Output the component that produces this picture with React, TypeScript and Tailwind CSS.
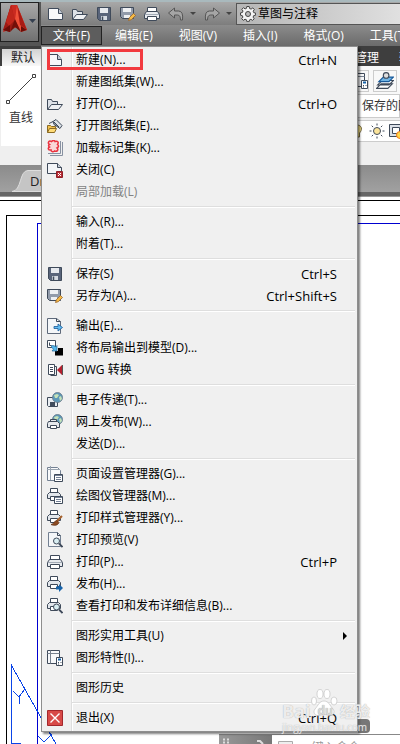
import type { ReactNode } from 'react';

const INK = '#3f4a5a';

function Icon({ children, className = 'w-4 h-4' }: { children: ReactNode; className?: string }) {
  return (
    <svg viewBox="0 0 16 16" className={className} fill="none" stroke={INK} aria-hidden="true">
      {children}
    </svg>
  );
}

/* Shared icon parts */

const Sheet = () => (
  <>
    <path d="M.5 2.500h10l4 5v6H.5z" fill="#f7f8fa" />
    <path d="M10.500 2.500v5h4" fill="#c3cad4" />
  </>
);

const Folder = () => (
  <>
    <path d="M.5 13.500v-10h4l1 2h5v3" fill="#dde1e7" />
    <path d="M.5 13.500l4-5h11l-4 5z" fill="#eef0f3" />
  </>
);

const Disk = () => (
  <>
    <path d="M1.500 1.500h13v13h-11l-2-2z" fill="#59647a" />
    <path d="M4 2h8v5H4z" fill="#e6e9ee" stroke="none" />
    <path d="M5 10h6v4H5z" fill="#d5dae2" stroke="none" />
    <path d="M6.500 10.500v3.500" strokeWidth="1.500" />
  </>
);

const Printer = () => (
  <>
    <path d="M3.500 5.500v-4h9v4" fill="#fff" />
    <path d="M2.500 5.500h11l2 3v4h-15v-4z" fill="#e8ebef" />
    <path d="M3.500 10.500h9v4h-9z" fill="#fff" />
    <path d="M1 8.500h14" stroke="#a3abb6" />
  </>
);

const SmallPrinter = () => (
  <>
    <path d="M3.500 4.500v-4h7v4" fill="#fff" />
    <path d="M2.500 4.500h9l2 2v4H.5v-4z" fill="#e3e7ec" />
    <path d="M3.500 8.500h7v4h-7z" fill="#fff" />
  </>
);

const Pencil = () => (
  <path d="M8.500 14.500l.8-2.800 4.200-4.200 2 2-4.200 4.200z" fill="#f5bb48" stroke="#9a642a" strokeWidth=".8" />
);

const Loupe = () => (
  <>
    <circle cx="9.500" cy="9" r="3" fill="#d9eef2" />
    <path d="M12 11.500l3.500 3.500" strokeWidth="1.800" />
  </>
);

const Globe = () => (
  <>
    <circle cx="10.500" cy="5.500" r="5" fill="#5d98b8" stroke="#657686" strokeWidth=".8" />
    <path d="M7 3l3-1 2 1-2 3-2 0zM12 5l2-1 1 3-2 2z" fill="#c5e2b8" stroke="none" />
  </>
);

const Palette = () => (
  <>
    <path d="M7.500 8.500h8v7h-8z" fill="#fff" />
    <path d="M8 9.500h7" stroke="#738095" />
    <path d="M9 11.500h5M9 13.500h5" stroke="#738095" />
  </>
);

const BlueArrow = () => (
  <path d="M9 10.500h3v-2.500l4 4-4 4v-2.500H9z" fill="#1763a9" stroke="none" />
);

const icons: Record<string, ReactNode> = {
  new: <Sheet />,
  open: <Folder />,
  save: <Disk />,
  print: <Printer />,
  saveAs: (
    <>
      <path d="M.5 1.500h13v11h-11l-2-2z" fill="#929baa" />
      <path d="M3 2h8v4H3zM4 9h6v3H4z" fill="#eef0f3" stroke="none" />
      <Pencil />
    </>
  ),
  openSet: (
    <>
      <path d="M6 3.500l3-2 6 6-2 3-6-4z" fill="#dde3e8" />
      <path d="M2 5.500l4-2 5 5M7 4l5 5" />
      <path d="M.5 14.500v-7h3l1 1h4v2" fill="#f2c14d" stroke="#8b6a24" />
      <path d="M.5 14.500l2-4h7l-2 4z" fill="#ffdc77" stroke="#8b6a24" />
    </>
  ),
  markup: (
    <>
      <path d="M15.500 2v13.500H3M13.500 1v12.500H1" stroke="#8791a1" />
      <path
        d="M2.500 4.500C0 3 2 0 4.500 1.500 6 0 7.500 0 8 1.500c3-1 4 1 2.500 3C12.500 6 11 7.500 10 8c2 2 0 4-2.500 3C6 12.500 4 11.500 4 10 1 10.500.5 8 2.500 7 1 6 1.500 5 2.500 4.500z"
        fill="#f9d7d8"
        stroke="#ea3340"
        strokeWidth="1.500"
      />
    </>
  ),
  close: (
    <>
      <path d="M.5 1.500h10l4 4v6H.5z" fill="#f3f5f8" />
      <path d="M10.500 1.500v4h4" fill="#c9d0d9" />
      <path d="M9.500 9.500h6v6h-6z" fill="#b92d35" stroke="#8f2028" />
      <path d="M11 11l3 3M14 11l-3 3" stroke="#fff" />
    </>
  ),
  exportFile: (
    <>
      <path d="M.5.5h9l4 3v12H.5z" fill="#f4f6f8" stroke="#5e697a" />
      <path d="M9.500.5v3h4" />
      <path d="M7 8.500h4V6l4.500 3.500L11 13v-2.500H7z" fill="#65bdf0" stroke="#17599a" strokeWidth=".8" />
    </>
  ),
  layout: (
    <>
      <path d="M.5.5h8v7h-8z" fill="#fff" />
      <path d="M2.500 2.500v3h2" />
      <path d="M8 11h3V8h5v7.500H8z" fill="#000" stroke="none" />
      <path d="M4.500 5.500l3 .3 1 1.200 1.500-1.500V11H5l1.500-1.800-2-2z" fill="#56b8ec" stroke="#27699a" strokeWidth=".7" />
    </>
  ),
  dwg: (
    <>
      <path d="M1.500 2.500h6v10h-6z" fill="#fff" />
      <path d="M7.500 4.500h2v9h-6" />
      <path d="M3 5.500h3M3 7.500h3M3 9.500h3" />
      <path d="M15 3v10l-5-5z" fill="#b51f2e" stroke="none" />
      <path d="M15.500 3v10" stroke="#555" />
    </>
  ),
  transmit: (
    <>
      <path d="M.5 5.500h10v9h-9l-1-1z" fill="#e9edf1" />
      <path d="M3 10h5v4H3z" fill="#414c5c" stroke="none" />
      <Globe />
    </>
  ),
  web: (
    <>
      <Globe />
      <path d="M3.500 7.500v-2h6v2M1.500 7.500h9l2 2v4H.5v-4z" fill="#e6e9ed" />
      <path d="M3.500 11.500h6v3h-6z" fill="#fff" />
    </>
  ),
  pageSetup: (
    <>
      <path d="M.5 1.500h10l3 3v10H.5z" fill="#f9fafb" stroke="#738092" />
      <path d="M3.500 0v14M0 3.500h13" stroke="#9aa4b0" />
      <Palette />
    </>
  ),
  plotter: (
    <>
      <SmallPrinter />
      <Palette />
    </>
  ),
  style: (
    <>
      <SmallPrinter />
      <path d="M15 6l-5 5" stroke="#a8622d" strokeWidth="2" />
      <path d="M4 14.500c3 0 3-4 6-4l2 2c-1 3-5 3.500-8 2z" fill="#8d4b22" stroke="#623318" strokeWidth=".8" />
    </>
  ),
  preview: (
    <>
      <path d="M1.500.5h9l3 3v11h-12z" fill="#f4f6f8" stroke="#738092" />
      <path d="M10.500.5v3h3" />
      <Loupe />
    </>
  ),
  publish: (
    <>
      <SmallPrinter />
      <BlueArrow />
    </>
  ),
  details: (
    <>
      <SmallPrinter />
      <Loupe />
    </>
  ),
  props: (
    <>
      <path d="M.5 .5h12v13H.5z" fill="#f7f8fa" />
      <path d="M3.500 .5v13M.5 3.500h12" stroke="#77818f" />
      <path d="M9.500 7.500h6v8h-6z" fill="#fff" />
      <path d="M11 9.500h3" stroke="#1763a9" strokeWidth="2" />
      <path d="M11 12.500h1M13.500 12.500h1M11 14h1" />
    </>
  ),
  exit: (
    <>
      <path d="M.5 .5h15v15H.5z" fill="#d84a48" stroke="#a3272c" />
      <path d="M3.500 3.500l9 9M12.500 3.500l-9 9" stroke="#fff" strokeWidth="1.400" />
    </>
  ),
  undo: <path d="M.5 7l6-5v3h4q5 0 4 9h-2q0-5-3-5h-3v3z" fill="#a5a5a5" stroke="#555" />,
  redo: <path d="M15.500 7l-6-5v3h-4q-5 0-4 9h2q0-5 3-5h3v3z" fill="#a5a5a5" stroke="#555" />,
};

type Item = { label: string; icon?: string; keys?: string; disabled?: boolean; sub?: boolean };

const groups: Item[][] = [
  [
    { label: '新建(N)...', icon: 'new', keys: 'Ctrl+N' },
    { label: '新建图纸集(W)...' },
    { label: '打开(O)...', icon: 'open', keys: 'Ctrl+O' },
    { label: '打开图纸集(E)...', icon: 'openSet' },
    { label: '加载标记集(K)...', icon: 'markup' },
    { label: '关闭(C)', icon: 'close' },
    { label: '局部加载(L)', disabled: true },
  ],
  [{ label: '输入(R)...' }, { label: '附着(T)...' }],
  [
    { label: '保存(S)', icon: 'save', keys: 'Ctrl+S' },
    { label: '另存为(A)...', icon: 'saveAs', keys: 'Ctrl+Shift+S' },
  ],
  [
    { label: '输出(E)...', icon: 'exportFile' },
    { label: '将布局输出到模型(D)...', icon: 'layout' },
    { label: 'DWG 转换', icon: 'dwg' },
  ],
  [
    { label: '电子传递(T)...', icon: 'transmit' },
    { label: '网上发布(W)...', icon: 'web' },
    { label: '发送(D)...' },
  ],
  [
    { label: '页面设置管理器(G)...', icon: 'pageSetup' },
    { label: '绘图仪管理器(M)...', icon: 'plotter' },
    { label: '打印样式管理器(Y)...', icon: 'style' },
    { label: '打印预览(V)', icon: 'preview' },
    { label: '打印(P)...', icon: 'print', keys: 'Ctrl+P' },
    { label: '发布(H)...', icon: 'publish' },
    { label: '查看打印和发布详细信息(B)...', icon: 'details' },
  ],
  [
    { label: '图形实用工具(U)', sub: true },
    { label: '图形特性(I)...', icon: 'props' },
  ],
  [{ label: '图形历史' }],
  [{ label: '退出(X)', icon: 'exit', keys: 'Ctrl+Q' }],
];

function FileMenu() {
  return (
    <div
      role="menu"
      className="absolute left-[41px] top-[46px] w-[317px] py-[2px] border border-[#8e8e8e] bg-[#f0f0f0] text-black shadow-[2px_2px_2px_#00000080] bg-[linear-gradient(to_right,#f0f0f0_29px,#dedede_29px,#dedede_30px,#fff_30px,#fff_31px,#f0f0f0_31px)]"
    >
      {groups.map((group, g) => (
        <div key={g}>
          {g > 0 && (
            <div role="separator" className="h-2 pt-[3px] pl-[30px] pr-[2px]">
              <div className="h-[2px] border-t border-[#dedede] bg-white" />
            </div>
          )}
          {group.map((item) => (
            <button
              key={item.label}
              role="menuitem"
              disabled={item.disabled}
              className="relative flex items-center w-full h-[22px] pl-[5px] pr-5 text-left whitespace-nowrap disabled:text-[#838383]"
            >
              <span className="w-[29px] shrink-0">{item.icon && <Icon>{icons[item.icon]}</Icon>}</span>
              <span className="flex-1">{item.label}</span>
              {item.keys && <span className="text-[13px]">{item.keys}</span>}
              {item.sub && (
                <span className="absolute right-[10px] border-y-4 border-y-transparent border-l-4 border-l-black" />
              )}
            </button>
          ))}
        </div>
      ))}
      <div className="absolute left-[5px] top-[2px] w-[96px] h-[21px] border-[3px] border-[#f23a3f]" />
    </div>
  );
}

function AppLogo() {
  return (
    <button
      aria-label="应用程序菜单"
      className="flex items-center w-[39px] h-[40px] border border-[#222] bg-linear-to-b from-[#a9a9a9] to-[#717171]"
    >
      <svg viewBox="0 0 37 38" className="w-[37px] h-[38px]" aria-hidden="true">
        <path d="M10 2h6l10 25-9-3-15 5z" fill="#c92a20" />
        <path d="M10 2L2 27l7 2 5-10z" fill="#9c1a13" />
        <path d="M10 2l4 15-6 6-3-4z" fill="#bf261b" />
        <path d="M16 2l10 25-6 2-6-12z" fill="#ef5038" />
        <path d="M16 2l10 25-7-5z" fill="#a81b14" />
        <path d="M14 16l6 13-6-5-5 5z" fill="#721009" />
        <path d="M2 27l7-5v7zM26 27l-6-4v6z" fill="#6b0d08" />
        <path d="M28 16h7l-3.500 4z" fill="#354050" />
      </svg>
    </button>
  );
}

function Toolbar() {
  return (
    <div className="flex items-center h-[23px] bg-linear-to-b from-[#a8a8a8] to-[#7d7d7d] overflow-hidden">
      <div className="flex items-center gap-2 pl-[7px] shrink-0">
        {['new', 'open', 'save', 'saveAs', 'print', 'undo'].map((name) => (
          <button key={name} aria-label={name}>
            <Icon>{icons[name]}</Icon>
          </button>
        ))}
      </div>
      <span className="ml-[6px] shrink-0 border-x-[3px] border-x-transparent border-t-[3px] border-t-[#444]" />
      <button aria-label="redo" className="ml-2 shrink-0">
        <Icon>{icons.redo}</Icon>
      </button>
      <span className="ml-[6px] shrink-0 border-x-[3px] border-x-transparent border-t-[3px] border-t-[#444]" />
      <button className="flex items-center gap-[2px] flex-1 h-[22px] ml-1 pl-[3px] border border-r-0 border-[#555] bg-linear-to-r from-[#b5b5b5] to-[#e0e0e0] text-black whitespace-nowrap">
        <svg viewBox="0 0 16 16" className="w-4 h-4 shrink-0" fill="none" stroke="#444" aria-hidden="true">
          <path
            d="M6.800.5h2.400l.4 2 1.500.6 1.700-1.200 1.500 1.600-1.100 1.700.6 1.500 1.800.3v2.200l-1.900.4-.6 1.500 1.100 1.700-1.600 1.600-1.700-1.100-1.400.6-.4 1.800H6.900l-.4-1.900-1.500-.6-1.700 1.200-1.600-1.700 1.200-1.600-.6-1.500L.5 9.200V6.900l1.900-.4.6-1.500-1.200-1.700 1.600-1.600 1.700 1.200 1.400-.6z"
            fill="#f4f4f4"
          />
          <circle cx="8" cy="8" r="2.500" fill="#bbb" />
        </svg>
        草图与注释
      </button>
    </div>
  );
}

function MenuBar() {
  return (
    <nav className="flex h-[21px] pt-px bg-linear-to-b from-[#8c8c8c] to-[#6b6b6b] text-white overflow-hidden">
      <button className="w-[61px] shrink-0 h-[19px] border border-[#222] bg-[#5d5d5d] leading-4">文件(F)</button>
      {['编辑(E)', '视图(V)', '插入(I)', '格式(O)', '工具(T)'].map((label) => (
        <button key={label} className="shrink-0 h-[19px] px-[13px] leading-4 whitespace-nowrap">
          {label}
        </button>
      ))}
    </nav>
  );
}

function Ribbon() {
  return (
    <section>
      <div className="flex justify-between h-5 bg-[#3e3e3e] overflow-hidden">
        <button className="w-[50px] ml-[2px] mt-[3px] pl-[9px] text-left bg-linear-to-b from-[#d2d2d2] to-[#f8f8f8] text-[#222] leading-4">
          默认
        </button>
        <div className="flex gap-5 w-[45px] text-white whitespace-nowrap leading-6">
          <button className="shrink-0">管理</button>
          <button className="shrink-0">输出</button>
        </div>
      </div>
      <div className="flex justify-between h-[99px] bg-[#efefef] overflow-hidden text-[#333]">
        <div className="ml-px w-[60px] h-20 bg-white">
          <button className="flex flex-col items-start pl-[5px] pt-2">
            <svg viewBox="0 0 32 32" className="w-8 h-8" fill="#fff" stroke="#444" aria-hidden="true">
              <path d="M3 27L27 3" />
              <path d="M.5 26.500h3v3h-3zM26.500.5h3v3h-3z" />
            </svg>
            <span className="pl-[3px] leading-6">直线</span>
          </button>
        </div>
        <div className="w-[50px]">
          <div className="flex gap-1 h-[28px] pt-1 bg-[#f8f8f8]">
            <button aria-label="图层特性" className="flex items-center justify-center w-[19px] h-[22px] border border-[#ccc]">
              <Icon>{icons.props}</Icon>
            </button>
            <button aria-label="图层" className="flex items-center justify-center w-[24px] h-[22px] border border-[#ccc]">
              <Icon className="w-[18px] h-[18px]">
                <path d="M.5 14.500l4-4h10l-4 4zM1.500 11.500l4-4h10l-4 4z" fill="#fff" />
                <path d="M2.500 8.500l4-4h9l-4 4z" fill="#70b4e4" stroke="#17599a" />
                <circle cx="9" cy="3" r="2.500" fill="#ddd" />
              </Icon>
            </button>
          </div>
          <div className="h-6 pl-[11px] border border-[#ccc] bg-white leading-[22px] whitespace-nowrap">保存的图层</div>
          <div className="flex items-center h-[22px] mt-[2px] gap-[3px] border-y border-[#ccc] bg-white">
            <Icon className="w-4 h-4 shrink-0">
              <path d="M6.500 2c6 0 6 5 3 8v4h-5v-4c-3-3-3-8 2-8z" fill="#f4df84" stroke="#766b45" />
            </Icon>
            <Icon className="w-4 h-4 shrink-0">
              <circle cx="8" cy="8" r="3.500" fill="#fbe49a" />
              <path d="M8 .5v2M8 13.500v2M.5 8h2M13.500 8h2M2.700 2.700l1.400 1.400M11.900 11.900l1.400 1.400M2.700 13.300l1.400-1.400M11.900 4.100l1.400-1.400" />
            </Icon>
            <Icon className="w-4 h-4 shrink-0">
              <path d="M1.500 1.500h13v12h-13z" fill="#dce1e8" />
              <path d="M4.500 4.500h7v6h-7z" fill="#fff" />
              <circle cx="12" cy="12" r="3.500" fill="#ffd64a" stroke="#f47a19" />
            </Icon>
          </div>
        </div>
      </div>
      <div className="h-[27px] pt-[5px] bg-linear-to-b from-[#8b8b8b] to-[#a1a1a1]">
        <button className="relative block w-20 h-[22px] ml-3 text-left text-[#222]">
          <svg viewBox="0 0 80 22" className="absolute inset-0 w-20 h-[22px]" aria-hidden="true">
            <path d="M0 21.500C10 21 7 .5 16 .5H80v21z" fill="#c5c5c5" stroke="#ddd" />
          </svg>
          <span className="relative pl-[18px] text-[13px]">Drawing1</span>
        </button>
      </div>
      <div className="h-[5px] border-b border-[#999] bg-[#666]" />
    </section>
  );
}

function Canvas() {
  return (
    <main className="relative flex-1 flex flex-col mt-[3px] border-t border-black">
      <div className="flex-1 flex mt-[14px] ml-[6px] pt-[7px] pl-[30px] border-l border-t border-black">
        <div className="flex-1 border-l border-t border-[#0000d0]" />
      </div>
      <svg
        viewBox="0 0 60 80"
        className="absolute left-0 bottom-0 w-[60px] h-20"
        fill="none"
        stroke="#0b45e8"
        shapeRendering="crispEdges"
        aria-hidden="true"
      >
        <path d="M20.500 79.500h-9V1.500L56 80M13 27l6 6 6-8M19 33v7M38 72l6 6 8-8" />
      </svg>
    </main>
  );
}

function CommandLine() {
  return (
    <div className="absolute left-[219px] right-0 bottom-0 flex h-[10px] border-t border-[#888] bg-white overflow-hidden">
      <div className="flex justify-end w-[53px] h-full shrink-0 bg-linear-to-r from-[#999] to-[#777]">
        <svg viewBox="0 0 49 9" className="w-[49px] h-[9px]" stroke="#ddd" fill="none" aria-hidden="true">
          <path d="M0 4.500h6M0 7.500h6" strokeDasharray="2 2" strokeWidth="2" />
          <path d="M34 6h3l3 3" strokeWidth="2" />
        </svg>
      </div>
      <svg viewBox="0 0 16 9" className="w-4 h-[9px] mt-px ml-[6px] shrink-0" fill="#eee" stroke="#aaa" aria-hidden="true">
        <path d="M.5 5.500h14v6H.5z" />
      </svg>
      <input
        aria-label="命令"
        placeholder="键入命令"
        className="w-[90px] h-4 mt-[5px] ml-[18px] placeholder:text-[#999] leading-4 outline-none"
      />
    </div>
  );
}

function Watermark() {
  return (
    <div className="absolute right-[30px] bottom-[11px] w-[92px] h-[44px] text-white/80 pointer-events-none">
      <div className="absolute right-0 bottom-0 w-3 h-[14px] rounded-r-sm bg-[#555]/80" />
      <svg viewBox="0 0 30 28" className="absolute left-[33px] top-0 w-[30px] h-7" fill="#fff" stroke="#bbb" strokeWidth=".6" aria-hidden="true">
        <ellipse cx="9" cy="5" rx="3" ry="4.500" />
        <ellipse cx="16" cy="5" rx="3" ry="4.500" />
        <ellipse cx="3" cy="12" rx="2.500" ry="4" />
        <ellipse cx="23" cy="12" rx="3" ry="4" />
        <path d="M13 12c5 0 6 5 9 8 3 4-1 8-5 6-3-1-5-1-8 0-4 2-8-2-5-6 3-3 4-8 9-8z" />
      </svg>
      <div className="absolute left-1 right-0 top-[12px] flex items-center justify-between h-5 leading-5 font-bold [text-shadow:0_0_1px_#999]">
        <span className="text-[18px]">Bai</span>
        <span className="text-[12px] text-[#d8d8d8]">du</span>
        <span className="text-[15px]">经验</span>
      </div>
      <div className="absolute left-1 bottom-0 text-[10px] leading-3 [text-shadow:0_0_1px_#999]">jingyan.baidu.com</div>
    </div>
  );
}

export default function App() {
  return (
    <div className="relative flex flex-col min-h-screen overflow-hidden bg-white text-[12px] leading-4 font-['Open_Sans','Noto_Sans_CJK_SC',sans-serif]">
      <header className="flex bg-[#8a8a8a] border-t-2 border-[#a9b9bd]">
        <div className="w-[41px] shrink-0 bg-[#555]">
          <AppLogo />
        </div>
        <div className="flex-1 min-w-0">
          <Toolbar />
          <MenuBar />
        </div>
      </header>
      <Ribbon />
      <Canvas />
      <CommandLine />
      <FileMenu />
      <Watermark />
    </div>
  );
}
